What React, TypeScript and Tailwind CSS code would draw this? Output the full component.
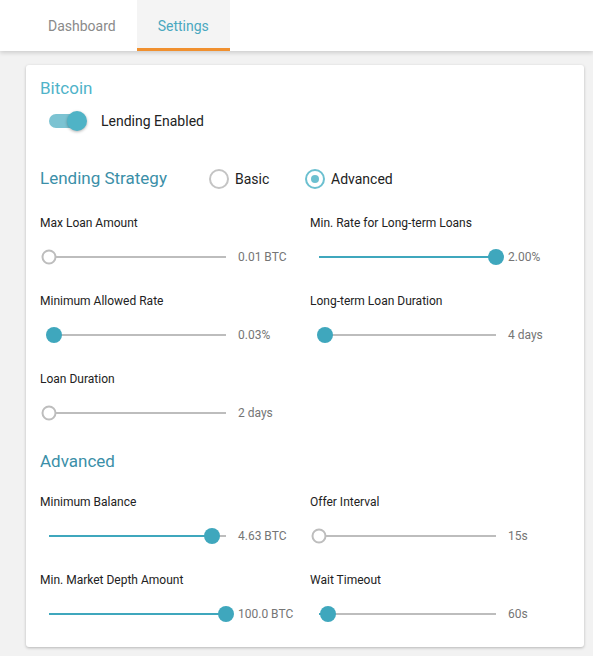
import React from 'react';

interface SliderFieldProps {
    label: string;
    value: string;
    fraction: number;
}

const SliderField: React.FC<SliderFieldProps> = ({ label, value, fraction }) => {
    const pct = `${fraction * 100}%`;
    const empty = fraction === 0;
    return (
        <div className="flex h-[68px] flex-col">
            <div className="flex h-5 items-center text-[12px] text-[#222]">{label}</div>
            <div className="flex h-12 items-center pl-[9px]">
                <div className="relative h-[2px] w-[177px] bg-[#bdbdbd]">
                    <div className="absolute left-0 top-0 h-[2px] bg-[#3fa7bd]" style={{ width: pct }} />
                    {empty ? (
                        <div
                            className="absolute top-1/2 h-[15px] w-[15px] -translate-x-1/2 -translate-y-1/2 rounded-full border-2 border-[#bdbdbd] bg-white"
                            style={{ left: pct }}
                        />
                    ) : (
                        <div
                            className="absolute top-1/2 h-4 w-4 -translate-x-1/2 -translate-y-1/2 rounded-full bg-[#3fa7bd]"
                            style={{ left: pct }}
                        />
                    )}
                </div>
                <span className="ml-3 text-[12px] text-[#757575]">{value}</span>
            </div>
        </div>
    );
};

const Radio: React.FC<{ label: string; checked?: boolean }> = ({ label, checked }) => (
    <label className="flex items-center gap-[6px] text-[14px] text-[#222]">
        <span
            className={`flex h-5 w-5 items-center justify-center rounded-full border-2 ${
                checked ? 'border-[#6cc0d0]' : 'border-[#c4c4c4]'
            }`}
        >
            {checked && <span className="h-[8px] w-[8px] rounded-full bg-[#6cc0d0]" />}
        </span>
        {label}
    </label>
);

const App: React.FC = () => {
    return (
        <div className="min-h-[656px] bg-[#f2f2f2] font-['Roboto',sans-serif]">
            <header className="relative z-10 flex h-[51px] bg-white pl-[27px] shadow-[0_2px_4px_rgba(0,0,0,0.15)]">
                <button type="button" className="h-full px-[21px] pt-[2px] text-[14px] text-[#8a8a8a]">
                    Dashboard
                </button>
                <button
                    type="button"
                    className="h-full border-b-[3px] border-[#f0902f] bg-[#f4f4f4] px-[21px] pt-[5px] text-[14px] text-[#4aa8c0]"
                >
                    Settings
                </button>
            </header>

            <main className="ml-[26px] mt-[14px] w-[558px] rounded-[3px] bg-white pb-[9px] pl-[14px] pt-[12px] shadow-[0_1px_3px_rgba(0,0,0,0.25)]">
                <h2 className="flex h-6 items-center text-[17px] text-[#4fb3c9]">Bitcoin</h2>

                <div className="flex h-10 items-center pl-[9px]">
                    <div className="relative h-[14px] w-[34px] rounded-full bg-[#7cc3d2]">
                        <div className="absolute right-[-4px] top-1/2 h-5 w-5 -translate-y-1/2 rounded-full bg-[#4fb3c6] shadow-[0_1px_3px_rgba(0,0,0,0.3)]" />
                    </div>
                    <span className="ml-[18px] text-[14px] text-[#222]">Lending Enabled</span>
                </div>

                <div className="mt-[18px] flex h-10 items-center">
                    <h3 className="w-[169px] text-[17px] text-[#3b8fa8]">Lending Strategy</h3>
                    <div className="w-[96px]">
                        <Radio label="Basic" />
                    </div>
                    <Radio label="Advanced" checked />
                </div>

                <div className="mt-[14px] grid grid-cols-[270px_1fr] gap-y-[10px]">
                    <SliderField label="Max Loan Amount" value="0.01 BTC" fraction={0} />
                    <SliderField label="Min. Rate for Long-term Loans" value="2.00%" fraction={1} />
                    <SliderField label="Minimum Allowed Rate" value="0.03%" fraction={0.03} />
                    <SliderField label="Long-term Loan Duration" value="4 days" fraction={0.035} />
                    <SliderField label="Loan Duration" value="2 days" fraction={0} />
                </div>

                <h2 className="mt-[13px] flex h-6 items-center text-[17px] text-[#3b8fa8]">Advanced</h2>

                <div className="mt-[18px] grid grid-cols-[270px_1fr] gap-y-[10px]">
                    <SliderField label="Minimum Balance" value="4.63 BTC" fraction={0.92} />
                    <SliderField label="Offer Interval" value="15s" fraction={0} />
                    <SliderField label="Min. Market Depth Amount" value="100.0 BTC" fraction={1} />
                    <SliderField label="Wait Timeout" value="60s" fraction={0.05} />
                </div>
            </main>
        </div>
    );
};

export default App;
